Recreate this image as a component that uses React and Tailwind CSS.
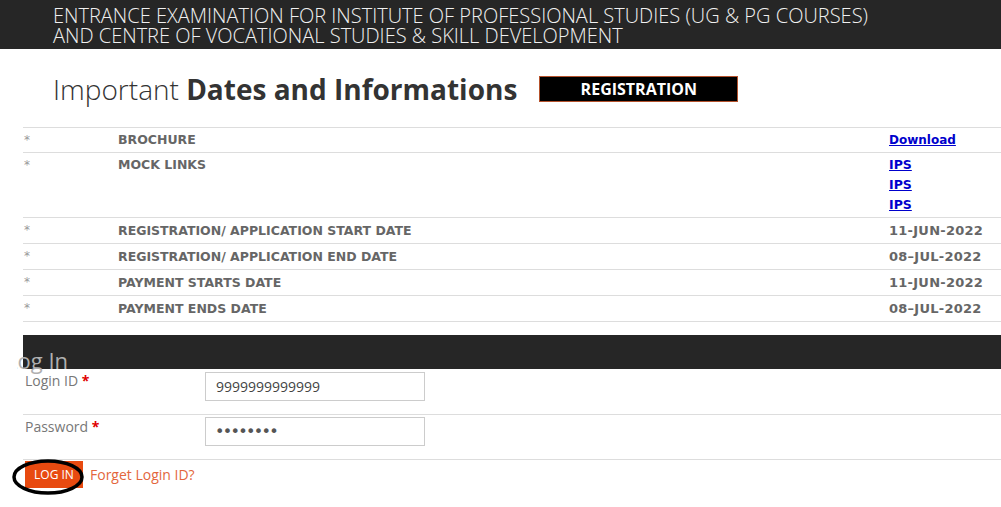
import React from "react";

const rows = [
  { label: "REGISTRATION/ APPLICATION START DATE", value: "11-JUN-2022" },
  { label: "REGISTRATION/ APPLICATION END DATE", value: "08–JUL-2022" },
  { label: "PAYMENT STARTS DATE", value: "11-JUN-2022" },
  { label: "PAYMENT ENDS DATE", value: "08–JUL-2022" },
];

export default function App() {
  return (
    <div className="w-[1001px] h-[507px] overflow-hidden bg-white font-['Open_Sans',sans-serif]">
      {/* Header */}
      <div className="bg-[#262626] h-[49px] pl-[53px] pt-[6px] text-[20px] leading-[20px] text-[#f0f0f0] font-light">
        <div>ENTRANCE EXAMINATION FOR INSTITUTE OF PROFESSIONAL STUDIES (UG &amp; PG COURSES)</div>
        <div>AND CENTRE OF VOCATIONAL STUDIES &amp; SKILL DEVELOPMENT</div>
      </div>

      {/* Title */}
      <div className="flex items-center pl-[53px] pt-[22px] h-[58px]">
        <h1 className="text-[28px] leading-[36px] text-[#333]">
          <span className="font-light">Important </span>
          <span className="font-bold">Dates and Informations</span>
        </h1>
        <div className="ml-[22px] w-[199px] h-[26px] bg-black border border-[#b5522c] flex items-center justify-center text-white font-bold text-[16px]">
          REGISTRATION
        </div>
      </div>

      {/* Table */}
      <div className="ml-[23px] mt-[20px] border-t border-[#dddddd] font-['DejaVu_Sans',sans-serif] text-[12.5px] text-[#666]">
        <div className="grid grid-cols-[95px_771px_1fr] border-b border-[#dddddd] py-[5px] leading-[14px]">
          <span className="pl-[1px] text-[#999] font-normal text-[12px]">*</span>
          <span className="font-bold">BROCHURE</span>
          <a href="#" className="font-bold text-[#0000cc] underline text-[12px]">Download</a>
        </div>
        <div className="grid grid-cols-[95px_771px_1fr] border-b border-[#dddddd] pt-[5px] pb-[5px] leading-[14px]">
          <span className="pl-[1px] text-[#999] font-normal text-[12px]">*</span>
          <span className="font-bold">MOCK LINKS</span>
          <div className="flex flex-col gap-[6px] text-[12.5px]">
            <a href="#" className="font-bold text-[#0000cc] underline">IPS</a>
            <a href="#" className="font-bold text-[#0000cc] underline">IPS</a>
            <a href="#" className="font-bold text-[#0000cc] underline">IPS</a>
          </div>
        </div>
        {rows.map((r, i) => (
          <div
            key={i}
            className="grid grid-cols-[95px_771px_1fr] border-b border-[#dddddd] py-[5px] leading-[15px]"
          >
            <span className="pl-[1px] text-[#999] font-normal text-[12px]">*</span>
            <span className="font-bold">{r.label}</span>
            <span className="font-bold text-[13px] tracking-[0.25px]">{r.value}</span>
          </div>
        ))}
      </div>

      {/* Log In bar */}
      <div className="relative mt-[13px] ml-[17px]">
        <div className="ml-[6px] h-[34px] bg-[#262626]" />
        <div className="absolute left-0 top-[10px] w-[80px] h-[30px] overflow-hidden">
          <div className="-ml-[11px] text-[22px] leading-[30px] text-[#b0b0b0]">Log In</div>
        </div>
      </div>

      {/* Form */}
      <div className="ml-[23px] text-[14px]">
        <div className="grid grid-cols-[182px_1fr] border-b border-[#dddddd] h-[46px]">
          <div className="pl-[2px] pt-[2px] leading-[20px] text-[#777]">
            Login ID <span className="text-[#e00000] font-bold">*</span>
          </div>
          <div className="pt-[3px]">
            <div className="w-[220px] h-[29px] border border-[#cccccc] pl-[10px] flex items-center text-[#444]">
              9999999999999
            </div>
          </div>
        </div>
        <div className="grid grid-cols-[182px_1fr] border-b border-[#dddddd] h-[45px]">
          <div className="pl-[2px] pt-[2px] leading-[20px] text-[#777]">
            Password <span className="text-[#e00000] font-bold">*</span>
          </div>
          <div className="pt-[2px]">
            <div className="w-[220px] h-[29px] border border-[#cccccc] pl-[9px] flex items-center text-[#555] font-['DejaVu_Sans',sans-serif] text-[16px] tracking-[-1.7px]">
              ••••••••
            </div>
          </div>
        </div>
        <div className="flex items-center pt-[1px] pl-[2px]">
          <div className="relative">
            <button className="w-[58px] h-[27px] bg-[#e84a10] text-white text-[12px] leading-[27px] text-center">
              LOG IN
            </button>
            <svg
              className="absolute left-[-13px] top-[-2px]"
              width="72"
              height="36"
              viewBox="0 0 72 36"
            >
              <ellipse cx="36" cy="18" rx="34" ry="16" fill="none" stroke="#000" strokeWidth="3.5" />
            </svg>
          </div>
          <a href="#" className="ml-[7px] text-[#e3663c] leading-[20px]">
            Forget Login ID?
          </a>
        </div>
      </div>
    </div>
  );
}
